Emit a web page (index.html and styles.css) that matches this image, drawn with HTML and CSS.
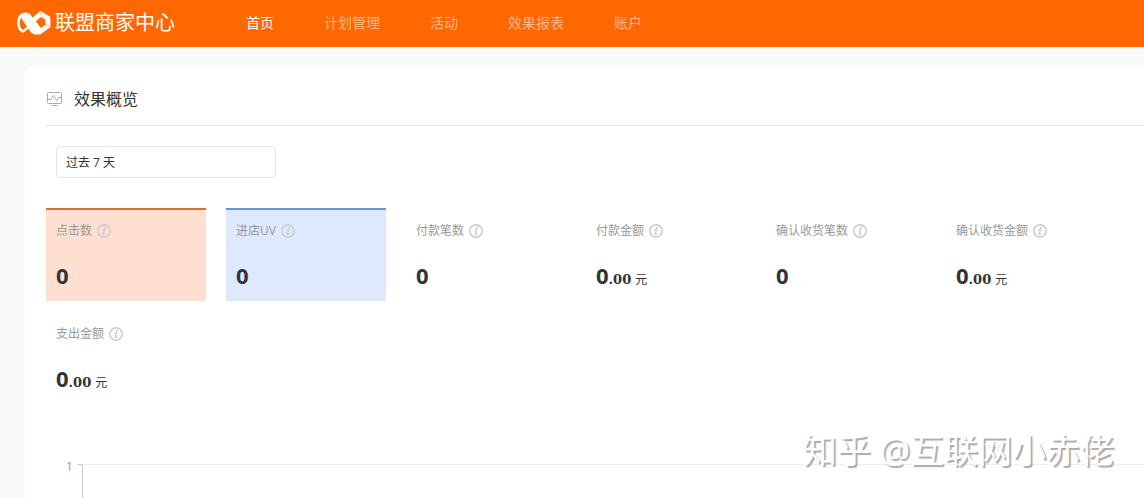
FILE: index.html
```html
<!DOCTYPE html>
<html lang="zh-CN">
<head>
<meta charset="utf-8">
<title>联盟商家中心</title>
<link rel="stylesheet" href="styles.css">
</head>
<body>
<svg class="defs" width="0" height="0" aria-hidden="true">
  <symbol id="info" viewBox="0 0 14 14">
    <circle cx="7" cy="7" r="6.2" fill="none" stroke="currentColor" stroke-width="1.5"/>
    <path d="M5.500 5.900h1.900L6.400 10q-.1.700.6.400l1-.6" fill="none" stroke="currentColor" stroke-width="1.400"/>
    <circle cx="7.900" cy="3.700" r="1" fill="currentColor"/>
  </symbol>
</svg>
<header class="topbar">
  <a class="brand" href="#">
    <svg class="brand-logo" viewBox="0 0 34 24" aria-hidden="true">
      <path d="M6.500 3C3 4.500 1.400 8 1.400 12s1.600 7 4.600 8.500l5-4" fill="none" stroke="#fff" stroke-width="2.600"/>
      <path d="M4.500 3 9 1.200l3.800 1.500L25.500 19 22 23.500h-4.500L14 21.500 4.500 7.500z" fill="#fff"/>
      <path d="M15 10.500 23.500 3l7.300 4.200.2 7.600-9.500 7" fill="none" stroke="#fff" stroke-width="5"/>
      <path d="m22.500.8 4.200 7.200M32.800 15.500l-5-2.500" fill="none" stroke="#ff9a55" stroke-width=".7"/>
    </svg>
    <span class="brand-name">联盟商家中心</span>
  </a>
  <nav class="nav">
    <a class="nav-link nav-link-active" href="#">首页</a>
    <a class="nav-link" href="#">计划管理</a>
    <a class="nav-link" href="#">活动</a>
    <a class="nav-link" href="#">效果报表</a>
    <a class="nav-link" href="#">账户</a>
  </nav>
</header>
<main class="panel">
  <div class="panel-head">
    <svg class="panel-icon" viewBox="0 0 16 16" fill="none" stroke="currentColor" aria-hidden="true">
      <rect x=".5" y="1.500" width="14" height="11" rx="1"/>
      <path d="M.5 8.500H4l2.500-4 3 5 1.500-3h3.500M4.500 14.500h6"/>
    </svg>
    <h1 class="panel-title">效果概览</h1>
  </div>
  <div class="filters">
    <select class="range" aria-label="时间范围"><option>过去 7 天</option></select>
  </div>
  <section class="metrics">
    <div class="metric metric-orange"><div class="metric-label">点击数<svg class="info"><use href="#info"/></svg></div><div class="metric-value">0</div></div>
    <div class="metric metric-blue"><div class="metric-label">进店UV<svg class="info"><use href="#info"/></svg></div><div class="metric-value">0</div></div>
    <div class="metric"><div class="metric-label">付款笔数<svg class="info"><use href="#info"/></svg></div><div class="metric-value">0</div></div>
    <div class="metric"><div class="metric-label">付款金额<svg class="info"><use href="#info"/></svg></div><div class="metric-value">0<span class="cents">.00</span><span class="unit">元</span></div></div>
    <div class="metric"><div class="metric-label">确认收货笔数<svg class="info"><use href="#info"/></svg></div><div class="metric-value">0</div></div>
    <div class="metric"><div class="metric-label">确认收货金额<svg class="info"><use href="#info"/></svg></div><div class="metric-value">0<span class="cents">.00</span><span class="unit">元</span></div></div>
    <div class="metric"><div class="metric-label">支出金额<svg class="info"><use href="#info"/></svg></div><div class="metric-value">0<span class="cents">.00</span><span class="unit">元</span></div></div>
  </section>
  <section class="chart">
    <span class="axis-label">1</span>
    <span class="axis-tick"></span>
    <div class="plot"></div>
  </section>
</main>
<div class="watermark">知乎 @互联网小赤佬</div>
</body>
</html>
```
FILE: styles.css
```css
* { box-sizing: border-box; }
body {
  margin: 0;
  height: 100vh;
  overflow: hidden;
  display: flex;
  flex-direction: column;
  background: #fafafa;
  color: #333;
  font: 12px/18px "Open Sans", "Noto Sans CJK SC", sans-serif;
}
a { color: inherit; text-decoration: none; }
.defs { position: absolute; }
.topbar {
  flex: none;
  display: flex;
  align-items: center;
  height: 47px;
  padding: 0 17px 2px;
  background: #ff6700;
}
.brand { display: flex; align-items: center; gap: 4px; width: 229px; color: #fff; }
.brand-logo { width: 34px; height: 24px; }
.brand-name { font-size: 20px; line-height: 28px; font-weight: 400; }
.nav { display: flex; gap: 50px; font-size: 14px; line-height: 20px; color: #ffb98a; }
.nav-link-active { color: #fff; }
.panel {
  flex: 1;
  display: flex;
  flex-direction: column;
  margin: 20px 0 0 25px;
  padding-left: 21px;
  background: #fff;
  border-top-left-radius: 6px;
}
.panel-head {
  display: flex;
  align-items: center;
  gap: 11px;
  height: 59px;
  padding: 6px 0 0 1px;
  border-bottom: 1px solid #e4e4e4;
}
.panel-icon { width: 16px; height: 16px; color: #aaa; }
.panel-title { margin: 0; font-size: 16px; line-height: 24px; font-weight: 400; }
.filters { padding: 20px 10px 30px; }
.range {
  display: block;
  width: 220px;
  height: 32px;
  padding: 1px 9px 0;
  appearance: none;
  background: #fff;
  border: 1px solid #e4e4e4;
  border-radius: 4px;
  color: #333;
  font: inherit;
}
.metrics { display: flex; flex-wrap: wrap; gap: 10px 20px; }
.metric { width: 160px; height: 93px; padding: 12px 10px 0; border-top: 2px solid transparent; }
.metric-orange { background: #ffdfd0; border-color: #d96c3a; }
.metric-blue { background: #dee8ff; border-color: #6a94d8; }
.metric-label { display: flex; align-items: center; gap: 5px; color: #999; }
.info { width: 14px; height: 14px; color: #ccc; }
.metric-value { margin-top: 20px; font-size: 22px; line-height: 30px; font-weight: 700; }
.cents { font-family: "DejaVu Serif", serif; font-size: 13px; }
.unit { margin-left: 4px; font-size: 12px; font-weight: 400; }
.chart { flex: 1; display: flex; margin-top: 54px; padding-left: 20px; }
.axis-label { width: 11px; line-height: 18px; color: #999; }
.axis-tick { width: 5px; height: 1px; margin-top: 6px; background: #ccc; }
.plot { flex: 1; margin-top: 6px; border-top: 1px solid #eee; border-left: 1px solid #ccc; }
.watermark {
  position: absolute;
  right: 30px;
  bottom: 25px;
  color: #fff;
  font-size: 34px;
  line-height: 46px;
  text-shadow: 2px 2px 1px #aaa;
}
```
